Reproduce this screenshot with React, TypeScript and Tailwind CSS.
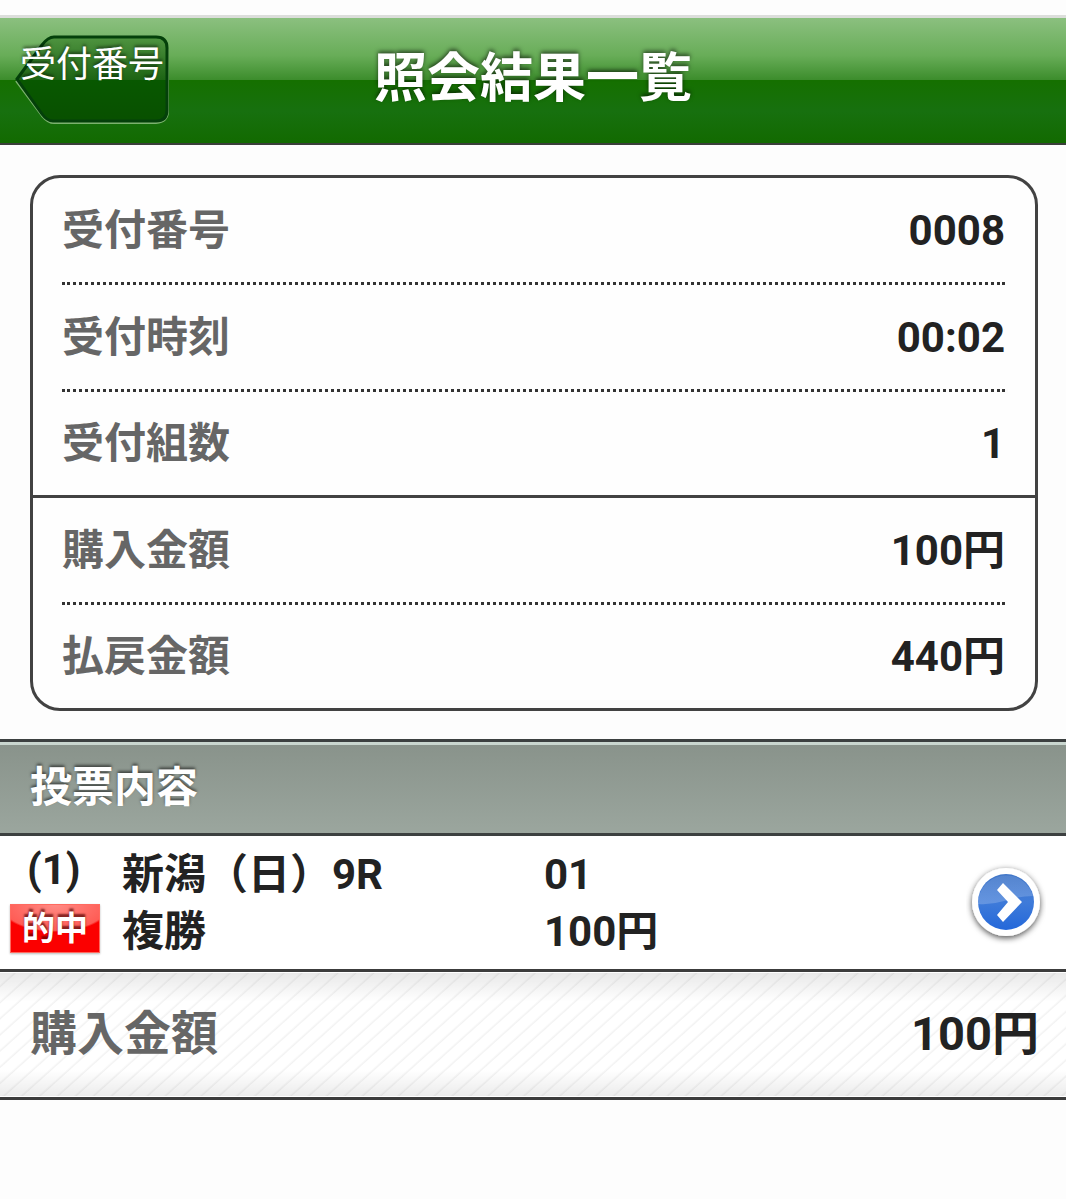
type Row = {
  label: string;
  value: string;
};

const receipt: Row[] = [
  { label: '受付番号', value: '0008' },
  { label: '受付時刻', value: '00:02' },
  { label: '受付組数', value: '1' },
];

const amounts: Row[] = [
  { label: '購入金額', value: '100円' },
  { label: '払戻金額', value: '440円' },
];

const BackButton = () => (
  <button
    type="button"
    className="relative flex h-[90px] w-[154px] items-start justify-center whitespace-nowrap text-[36px] leading-[61px] text-white"
  >
    <svg className="absolute inset-0" width="154" height="90" viewBox="0 0 154 90" fill="none" aria-hidden="true">
      <defs>
        <linearGradient id="back" x1="0" y1="0" x2="0" y2="1">
          <stop offset="0" stopColor="#4f9440" />
          <stop offset="0.51" stopColor="#1d6414" />
          <stop offset="0.51" stopColor="#085800" />
          <stop offset="1" stopColor="#085000" />
        </linearGradient>
      </defs>
      <path
        d="M1 46 L27 81 Q33 88 39 88 H141 Q153 87 153 76 V14"
        stroke="#7cb26f"
        strokeWidth="2"
      />
      <path
        d="M2 44 L27 10 Q33 2 39 2 H141 Q152 2 152 13 V75 Q152 86 141 86 H38 Q32 86 27 79 Z"
        fill="url(#back)"
        stroke="#04400a"
        strokeWidth="3"
      />
    </svg>
    <span className="relative [text-shadow:0_-2px_3px_rgba(0,0,0,0.5)]">受付番号</span>
  </button>
);

const Header = () => (
  <header className="grid h-[130px] grid-cols-[1fr_auto_1fr] items-start border-t-3 border-b-2 border-t-[#dcdedb] border-b-[#3a3f3a] bg-[linear-gradient(#8bc07f_0,#68ad58_30%,#3b8c2b_50%,#157000_50%,#17700f_75%,#126a00_100%)] pt-[17px]">
    <div className="pl-[15px]">
      <BackButton />
    </div>
    <h1 className="text-[53px] leading-[88px] font-bold text-white [text-shadow:0_-2px_4px_rgba(0,0,0,0.6)]">
      照会結果一覧
    </h1>
  </header>
);

const SummaryRows = ({ rows }: { rows: Row[] }) => (
  <dl className="pr-[30px] pl-[29px]">
    {rows.map((row) => (
      <div
        key={row.label}
        className="flex h-[107px] items-center justify-between border-b-3 border-dotted border-[#333] last:h-[103px] last:border-b-0"
      >
        <dt className="text-[#666]">{row.label}</dt>
        <dd>{row.value}</dd>
      </div>
    ))}
  </dl>
);

const ArrowIcon = () => (
  <svg width="80" height="84" viewBox="0 0 80 84" aria-hidden="true">
    <defs>
      <linearGradient id="ball" x1="0" y1="0" x2="0" y2="1">
        <stop offset="0" stopColor="#4277c8" />
        <stop offset="0.5" stopColor="#3f7bd9" />
        <stop offset="1" stopColor="#2468da" />
      </linearGradient>
      <linearGradient id="gloss" x1="0" y1="0" x2="0" y2="1">
        <stop offset="0" stopColor="#fff" stopOpacity="0.1" />
        <stop offset="1" stopColor="#fff" stopOpacity="0.2" />
      </linearGradient>
      <filter id="drop" x="-30%" y="-30%" width="160%" height="160%">
        <feDropShadow dx="0" dy="2" stdDeviation="3" floodColor="#000" floodOpacity="0.7" />
      </filter>
    </defs>
    <circle cx="40" cy="41" r="34" fill="#fff" filter="url(#drop)" />
    <circle cx="40" cy="41" r="28" fill="url(#ball)" />
    <path d="M12 43 A28 28 0 0 1 67 35 Q53 35 38 40 Q25 44 12 43 Z" fill="url(#gloss)" />
    <path d="M37 22 L56 41 L37 61 L31 54 L42 41 L31 29 Z" fill="#fff" />
  </svg>
);

const BetEntry = () => (
  <div className="grid h-[133px] grid-cols-[122px_1fr_1fr_auto] items-center bg-white leading-[57px]">
    <div className="self-start">
      <p className="pl-[27px] leading-[68px]">(1)</p>
      <span className="ml-[10px] block h-[49px] w-[90px] border border-[#ff6a60] bg-[radial-gradient(ellipse_56px_27px_at_50%_0,#ff8a84_0,#ff5c55_94%,#fb0000_100%)] text-center text-[33px] leading-[48px] text-white shadow-[0_1px_2px_#bbb] [text-shadow:0_-3px_2px_rgba(80,0,0,0.7)]">
        的中
      </span>
    </div>
    <div>
      <p>新潟（日）9R</p>
      <p>複勝</p>
    </div>
    <div>
      <p>01</p>
      <p>100円</p>
    </div>
    <button type="button" aria-label="詳細" className="mr-5">
      <ArrowIcon />
    </button>
  </div>
);

const App = () => {
  return (
    <div className="min-h-screen bg-[#fdfdfd] pt-[15px] font-[Roboto,'Noto_Sans_CJK_JP',sans-serif] text-[#222]">
      <Header />

      <main className="text-[42px] font-bold">
        <section className="mt-[30px] mr-[28px] mb-[28px] ml-[30px] rounded-[30px] border-3 border-[#424242] bg-[#fefefe]">
          <SummaryRows rows={receipt} />
          <hr className="border-t-3 border-[#424242]" />
          <SummaryRows rows={amounts} />
        </section>

        <h2 className="h-[97px] border-y-3 border-[#3c4040] bg-[linear-gradient(#c9d6cf_0,#c9d6cf_3px,#89938b_3px,#9ba69e_100%)] pl-[30px] leading-[91px] text-white [text-shadow:0_-2px_3px_rgba(0,0,0,0.55)]">
          投票内容
        </h2>

        <BetEntry />

        {/* total */}
        <div className="border-y-3 border-[#3c3c3c] bg-[linear-gradient(rgba(0,0,0,0.09),transparent_24%,transparent_78%,rgba(0,0,0,0.08)),repeating-linear-gradient(138deg,#fff_0,#fff_9px,#f2f2f2_11px,#fff_12px)]">
          <dl className="flex h-[125px] items-center justify-between border-y border-white pr-[27px] pl-[30px] text-[47px]">
            <dt className="text-[#666]">購入金額</dt>
            <dd>100円</dd>
          </dl>
        </div>
      </main>
    </div>
  );
};

export default App;
